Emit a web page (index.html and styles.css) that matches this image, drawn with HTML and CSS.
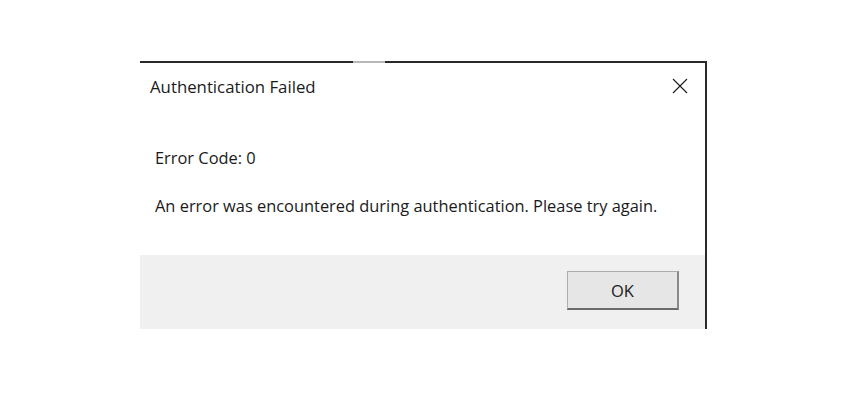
FILE: index.html
```html
<!DOCTYPE html>
<html lang="en">
<head>
    <meta charset="UTF-8">
    <title>Authentication Failed</title>
    <link rel="stylesheet" href="styles.css">
</head>
<body>
    <div class="dialog">
        <div class="title-bar">
            <span class="title">Authentication Failed</span>
            <span class="close">
                <svg width="16" height="16" viewBox="0 0 16 16">
                    <path d="M1 1 L15 15 M15 1 L1 15" stroke="#1a1a1a" stroke-width="1.1" fill="none"/>
                </svg>
            </span>
        </div>
        <div class="message">
            <p class="code">Error Code: 0</p>
            <p class="text">An error was encountered during authentication. Please try again.</p>
        </div>
        <div class="footer">
            <button class="ok">OK</button>
        </div>
    </div>
</body>
</html>
```

FILE: styles.css
```css
body {
    margin: 0;
    background: #fff;
    font-family: "Open Sans", "Noto Sans", Arial, sans-serif;
    color: #1a1a1a;
}
.dialog {
    position: relative;
    margin: 61px 0 0 140px;
    width: 565px;
    border-top: 2px solid #2a2a2a;
    border-right: 2px solid #2a2a2a;
    background: #fff;
}
/* lighter piece of the top edge */
.dialog::before {
    content: "";
    position: absolute;
    top: -2px;
    left: 213px;
    width: 32px;
    height: 2px;
    background: #b8b8b8;
}
.title-bar {
    height: 46px;
    display: flex;
    align-items: center;
    justify-content: space-between;
    padding: 0 17px 0 10px;
}
.title {
    font-size: 16.8px;
}
.close {
    display: flex;
    width: 16px;
    height: 16px;
}
.message {
    height: 146px;
    box-sizing: border-box;
    padding: 37px 0 0 15px;
}
.message p {
    margin: 0;
    font-size: 16.4px;
    line-height: 23px;
}
.message .text {
    margin-top: 25px;
}
.footer {
    height: 74px;
    background: #f0f0f0;
    display: flex;
    justify-content: flex-end;
    align-items: flex-start;
    padding: 16px 26px 0 0;
    box-sizing: border-box;
}
.ok {
    width: 112px;
    height: 39px;
    background: #e6e6e6;
    border: 1px solid #adadad;
    border-bottom: 2px solid #6a6a6a;
    border-right: 2px solid #8a8a8a;
    font-family: "Open Sans", "Noto Sans", Arial, sans-serif;
    font-size: 16.5px;
    color: #1a1a1a;
}
```
